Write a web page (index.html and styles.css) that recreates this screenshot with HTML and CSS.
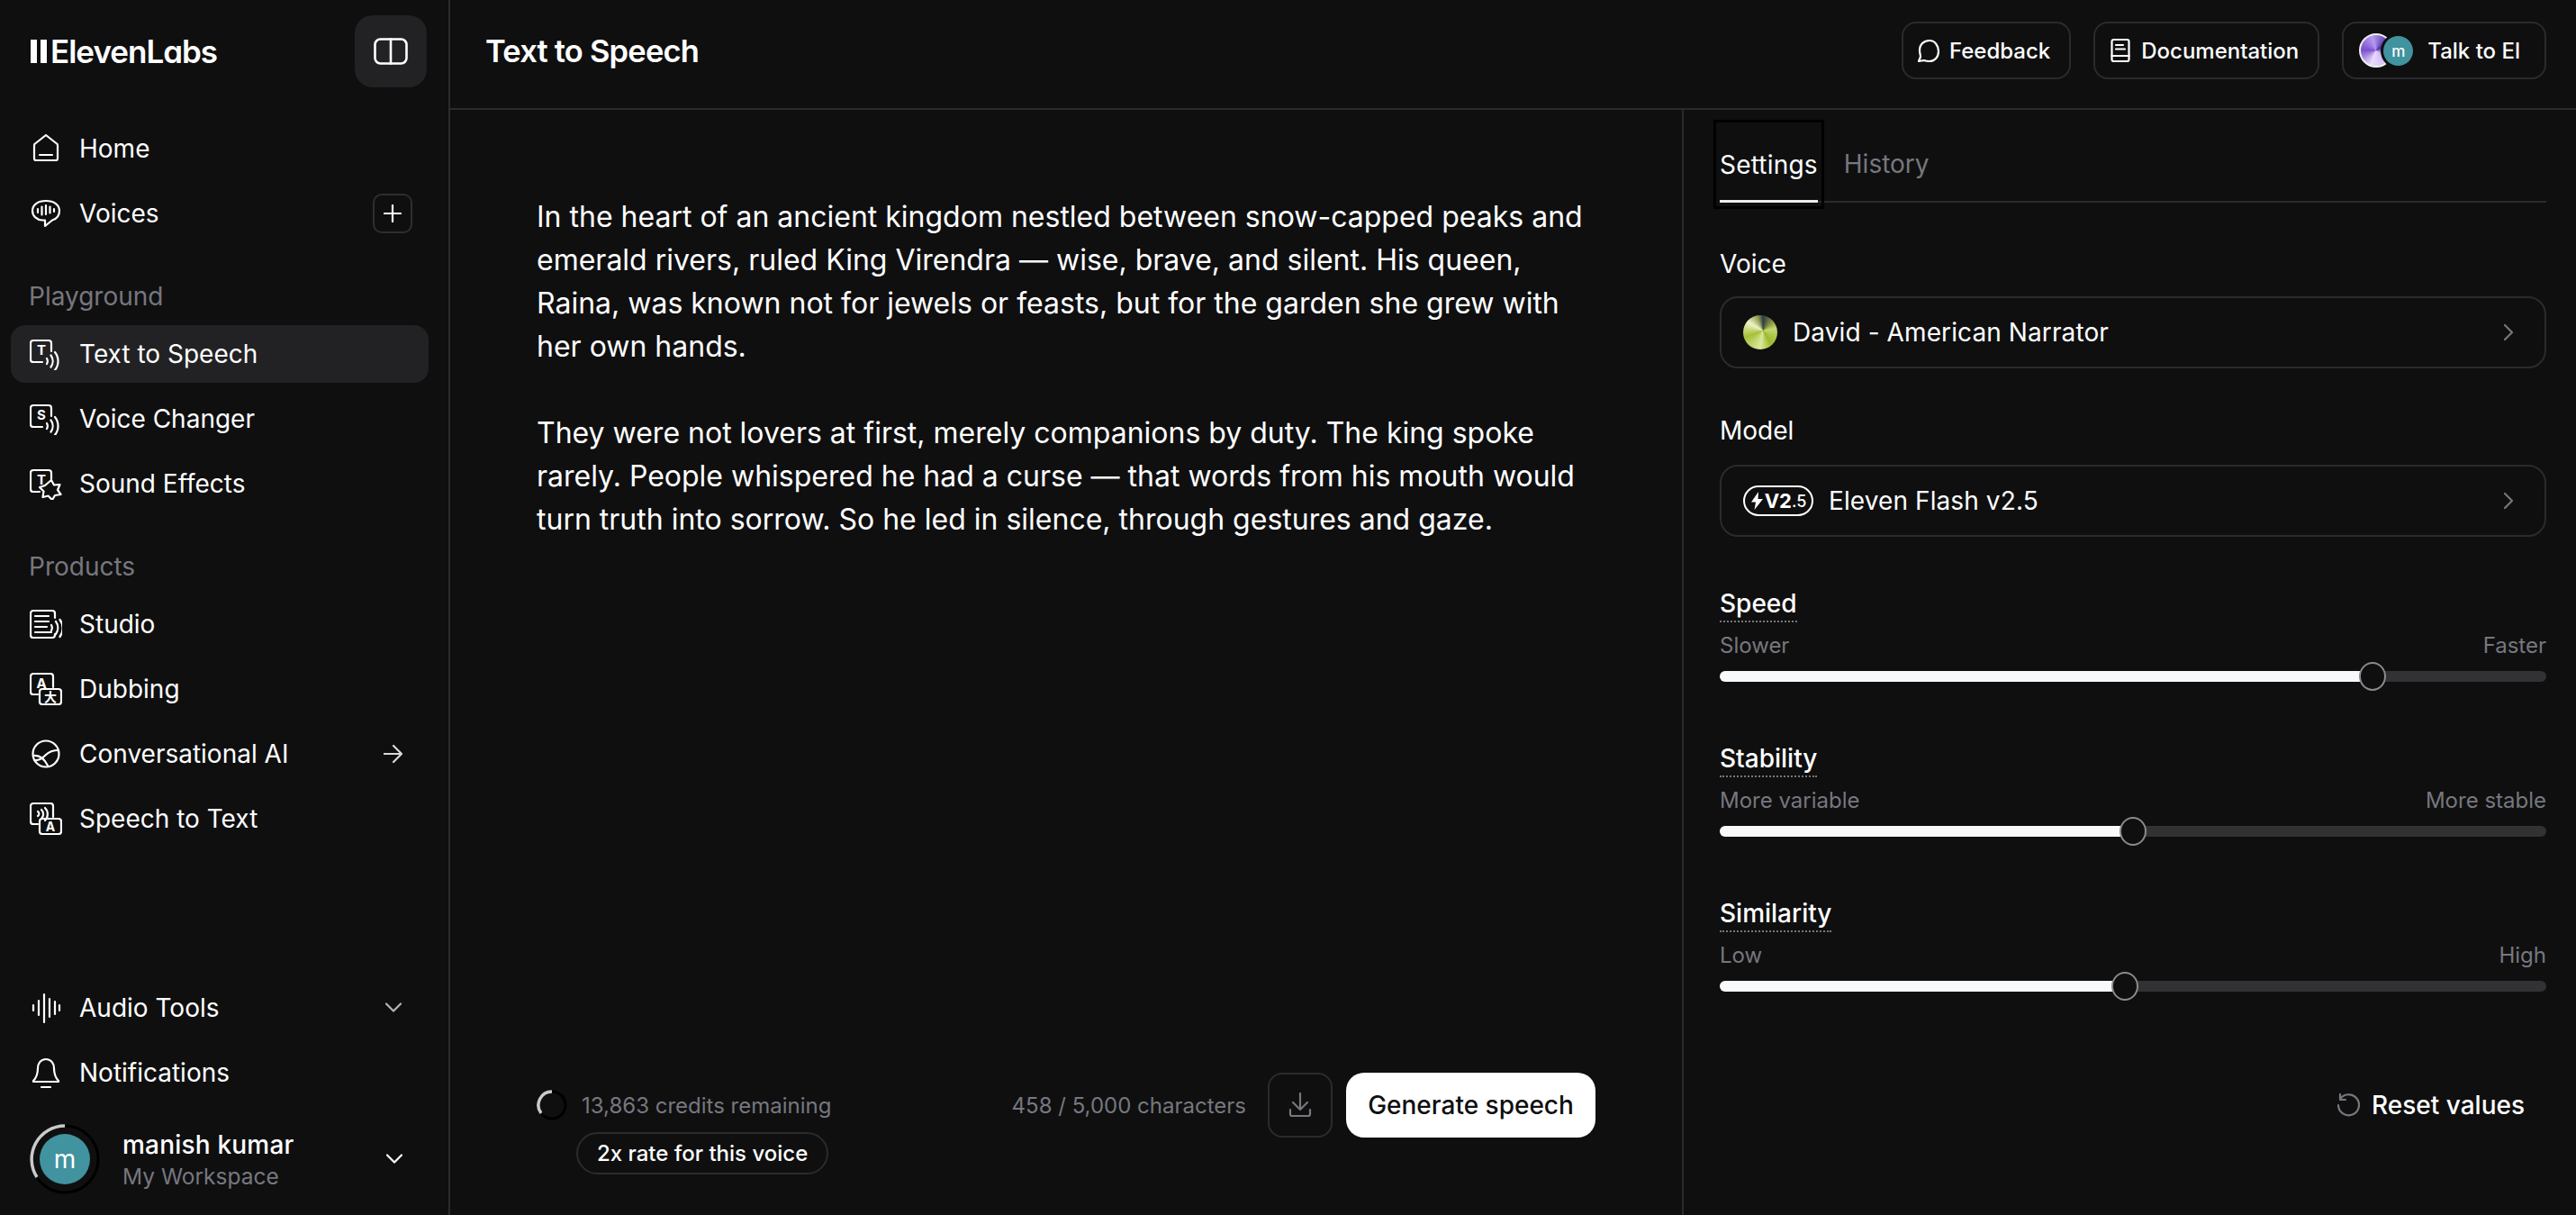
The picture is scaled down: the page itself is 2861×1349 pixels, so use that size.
FILE: index.html
```html
<!DOCTYPE html>
<html lang="en">
<head>
<meta charset="utf-8">
<title>Text to Speech</title>
<link rel="stylesheet" href="styles.css">
</head>
<body>
<div class="app">
  <aside class="sidebar">
    <div class="brand">
      <div class="logo"><span class="logo-bars"><i></i><i></i></span><span class="logo-text">ElevenLabs</span></div>
      <button class="toggle"><svg width="38" height="30" viewBox="0 0 38 30" class="ico ico-strong"><rect x="1.500" y="1.500" width="35" height="27" rx="6"/><path d="M19 1.500v27"/></svg></button>
    </div>
    <nav class="nav nav-top">
      <a class="item"><svg class="ico item-ico" viewBox="0 0 36 36"><path d="M18 3 30 12.500a2 2 0 0 1 1 2V29a2 2 0 0 1-2 2H7a2 2 0 0 1-2-2V14.500a2 2 0 0 1 1-2Z"/><path d="M11 25h14"/></svg><span>Home</span></a>
      <a class="item"><svg class="ico item-ico" viewBox="0 0 36 36"><path d="M18 4C9 4 3 8.500 3 15c0 6 5 10 11 10.500h3l0 6.500 8-6.500C30 24 33 20 33 15 33 8.500 27 4 18 4Z"/><path d="M9 13v4M13.500 10.500v9M18 9v10M22.500 10.500v7M27 13v3"/></svg><span>Voices</span><span class="plus"><svg class="ico" width="20" height="20" viewBox="0 0 20 20"><path d="M10 1v18M1 10h18"/></svg></span></a>
    </nav>
    <div class="section-label">Playground</div>
    <nav class="nav">
      <a class="item active"><svg class="ico item-ico" viewBox="0 0 36 36"><path d="M14 27H4a3 3 0 0 1-3-3V6a3 3 0 0 1 3-3h17a3 3 0 0 1 3 3v9"/><text x="13" y="19" class="ico-text">T</text><path d="M19 23a6 6 0 0 1 0 6M23.500 19.500a11 11 0 0 1 0 13M28 16a16 16 0 0 1 0 20"/></svg><span>Text to Speech</span></a>
      <a class="item"><svg class="ico item-ico" viewBox="0 0 36 36"><path d="M14 27H4a3 3 0 0 1-3-3V6a3 3 0 0 1 3-3h17a3 3 0 0 1 3 3v9"/><text x="13" y="19" class="ico-text">S</text><path d="M19 23a6 6 0 0 1 0 6M23.500 19.500a11 11 0 0 1 0 13M28 16a16 16 0 0 1 0 20"/></svg><span>Voice Changer</span></a>
      <a class="item"><svg class="ico item-ico" viewBox="0 0 36 36"><path d="M11 27H4a3 3 0 0 1-3-3V6a3 3 0 0 1 3-3h17a3 3 0 0 1 3 3v7"/><text x="13" y="19" class="ico-text">T</text><path d="M24 14l3 5.500 6.500-.5-2.500 6 3.500 5-6.500 1L25 36l-4.500-4.500-6 1.500 1-6.500-4.500-4.500 6-2Z"/></svg><span>Sound Effects</span></a>
    </nav>
    <div class="section-label">Products</div>
    <nav class="nav">
      <a class="item"><svg class="ico item-ico" viewBox="0 0 36 36"><path d="M28 11V6a3 3 0 0 0-3-3H4a3 3 0 0 0-3 3v24a3 3 0 0 0 3 3h21a3 3 0 0 0 3-3v-1"/><path d="M6 9h15M6 15h15M6 21h13M6 27h18"/><path d="M24 19a6 6 0 0 1 0 6M29 15a12 12 0 0 1 0 14M33.500 13a16 16 0 0 1 0 19"/></svg><span>Studio</span></a>
      <a class="item"><svg class="ico item-ico" viewBox="0 0 36 36"><path d="M9 24H4a3 3 0 0 1-3-3V4a3 3 0 0 1 3-3h19a3 3 0 0 1 3 3v12"/><text x="13" y="17" class="ico-text">A</text><rect x="11" y="18" width="24" height="17" rx="3"/><text x="23" y="32" class="ico-text ico-small">大</text></svg><span>Dubbing</span></a>
      <a class="item"><svg class="ico item-ico" viewBox="0 0 36 36"><circle cx="18" cy="18" r="14.500"/><path d="M4 20c7-1 12 3 16 11M5 25c5 1 11-4 13-6 3-3 8-5 14-5"/></svg><span>Conversational AI</span><svg class="ico arrow" width="22" height="22" viewBox="0 0 22 22"><path d="M0 11h20M11 2l9 9-9 9"/></svg></a>
      <a class="item"><svg class="ico item-ico" viewBox="0 0 36 36"><path d="M9 24H4a3 3 0 0 1-3-3V4a3 3 0 0 1 3-3h19a3 3 0 0 1 3 3v12"/><path d="M9 10a3 3 0 0 1 0 5M13 8a7 7 0 0 1 0 10M17 6a10 10 0 0 1 0 14"/><rect x="11" y="18" width="24" height="17" rx="3"/><text x="23" y="32" class="ico-text ico-small">A</text></svg><span>Speech to Text</span></a>
    </nav>
    <div class="sidebar-bottom">
      <a class="item"><svg class="ico item-ico" viewBox="0 0 36 36"><path d="M4 15v6M10 10v16M16 3v31M22 8v20M28 11v14M33 15v6"/></svg><span>Audio Tools</span><svg class="ico chev chev-dim" width="18" height="12" viewBox="0 0 18 12"><path d="M1 1.500l8 8 8-8"/></svg></a>
      <a class="item"><svg class="ico item-ico" viewBox="0 0 36 36"><path d="M18 3c-6 0-9 5-9 10 0 7-2 11-5 14v1h28v-1c-3-3-5-7-5-14 0-5-3-10-9-10Z"/><path d="M13 34h10"/></svg><span>Notifications</span></a>
      <div class="user">
        <div class="ring">
          <svg width="78" height="78" viewBox="0 0 78 78" class="ring-svg"><circle cx="39" cy="39" r="37" class="ring-track"/><path d="M39 2A37 37 0 0 0 8 59" class="ring-arc"/></svg>
          <span class="avatar">m</span>
        </div>
        <div class="user-text"><div class="user-name">manish kumar</div><div class="user-ws">My Workspace</div></div>
        <svg class="ico chev" width="18" height="12" viewBox="0 0 18 12"><path d="M1 1.500l8 8 8-8"/></svg>
      </div>
    </div>
  </aside>

  <div class="content">
    <header class="topbar">
      <h1 class="title">Text to Speech</h1>
      <div class="top-actions">
        <button class="pill"><svg class="ico" width="26" height="28" viewBox="0 0 26 28"><path d="M14 3C8 3 3 7 3 14c0 3 1 5 1 7l-2 5 6-1c2 1 4 1 6 1 6 0 10-5 10-11S20 3 14 3Z"/></svg>Feedback</button>
        <button class="pill pill-doc"><svg class="ico" width="22" height="28" viewBox="0 0 22 28"><rect x="1.500" y="2" width="19" height="24" rx="2"/><path d="M1.500 20h19M6 8h8M6 12.500h10"/></svg>Documentation</button>
        <button class="pill pill-talk"><span class="duo"><span class="duo-purple"></span><span class="duo-teal">m</span></span>Talk to El</button>
      </div>
    </header>
    <div class="workspace">
      <main class="editor">
        <div class="editor-text">
          <p>In the heart of an ancient kingdom nestled between snow-capped peaks and emerald rivers, ruled King Virendra — wise, brave, and silent. His queen, Raina, was known not for jewels or feasts, but for the garden she grew with her own hands.</p>
          <p>They were not lovers at first, merely companions by duty. The king spoke rarely. People whispered he had a curse — that words from his mouth would turn truth into sorrow. So he led in silence, through gestures and gaze.</p>
        </div>
        <div class="editor-footer">
          <div class="credits">
            <div class="credit-row">
              <svg width="34" height="34" viewBox="0 0 34 34" class="spinner"><circle cx="17" cy="17" r="15" class="ring-track"/><path d="M17 2A15 15 0 0 0 5 26" class="ring-arc"/></svg>
              <span class="muted">13,863 credits remaining</span>
            </div>
            <span class="chip">2x rate for this voice</span>
          </div>
          <div class="gen">
            <span class="muted">458 / 5,000 characters</span>
            <button class="download"><svg class="ico ico-muted" width="26" height="28" viewBox="0 0 26 28"><path d="M13 1v18M5 11l8 8 8-8M2 19v5a2 2 0 0 0 2 2h18a2 2 0 0 0 2-2v-5"/></svg></button>
            <button class="generate">Generate speech</button>
          </div>
        </div>
      </main>
      <section class="panel">
        <div class="tabs"><span class="tab tab-on">Settings</span><span class="tab">History</span></div>
        <div class="field field-voice">
          <div class="field-label">Voice</div>
          <div class="select"><span class="orb"></span><span class="select-text select-voice">David - American Narrator</span><svg class="ico ico-muted select-chev" width="12" height="20" viewBox="0 0 12 20"><path d="M2 2l8 8-8 8"/></svg></div>
        </div>
        <div class="field field-model">
          <div class="field-label">Model</div>
          <div class="select select-tall"><span class="badge"><svg width="13" height="20" viewBox="0 0 13 20"><path d="M8 0 0 11.500h5L3.500 20 13 8H7.500Z" fill="#fff"/></svg><b>V2</b><b class="badge-small">.5</b></span><span class="select-text select-model">Eleven Flash v2.5</span><svg class="ico ico-muted select-chev" width="12" height="20" viewBox="0 0 12 20"><path d="M2 2l8 8-8 8"/></svg></div>
        </div>
        <div class="slider slider-first">
          <span class="slider-name">Speed</span>
          <div class="slider-ends"><span>Slower</span><span>Faster</span></div>
          <div class="track"><div class="fill" style="width:79%"><span class="thumb"></span></div></div>
        </div>
        <div class="slider">
          <span class="slider-name">Stability</span>
          <div class="slider-ends"><span>More variable</span><span>More stable</span></div>
          <div class="track"><div class="fill" style="width:50%"><span class="thumb"></span></div></div>
        </div>
        <div class="slider">
          <span class="slider-name">Similarity</span>
          <div class="slider-ends"><span>Low</span><span>High</span></div>
          <div class="track"><div class="fill" style="width:49%"><span class="thumb"></span></div></div>
        </div>
        <div class="reset"><svg class="ico ico-muted" width="26" height="26" viewBox="0 0 26 26"><path d="M5 5a11.500 11.500 0 1 1-3 8"/><path d="M4 1v6h6"/></svg><span>Reset values</span></div>
      </section>
    </div>
  </div>
</div>
</body>
</html>
```
FILE: styles.css
```css
* { box-sizing: border-box; }
html, body { margin: 0; height: 100%; }
body {
  background: #0f0f10;
  color: #fff;
  font-family: Inter, "Noto Sans", sans-serif;
  font-size: 28px;
  overflow: hidden;
}
button { font: inherit; color: inherit; background: none; padding: 0; border: 0; }
.app { display: flex; width: 100%; height: 100vh; }

.ico { fill: none; stroke: #fff; stroke-width: 2.200; stroke-linecap: round; stroke-linejoin: round; flex: none; }
.ico-strong { stroke-width: 2.600; }
.ico-muted { stroke: #77777e; }
.ico-text { fill: #fff; stroke: none; font-size: 15px; font-weight: 700; text-anchor: middle; font-family: Inter, sans-serif; }
.ico-small { font-size: 14px; font-family: Inter, "Noto Sans CJK SC", sans-serif; }

/* sidebar */
.sidebar {
  width: 500px; flex: none;
  border-right: 2px solid #2b2b2d;
  display: flex; flex-direction: column;
  padding: 17px 0 23px;
}
.brand { display: flex; align-items: center; justify-content: space-between; padding: 0 24px 0 34px; height: 80px; }
.logo { display: flex; align-items: center; }
.logo-bars { display: flex; gap: 4px; margin-right: 4px; }
.logo-bars i { display: block; width: 7px; height: 26px; background: #fff; }
.logo-text { font-size: 35px; font-weight: 600; letter-spacing: -1px; font-feature-settings: "cv11"; }
.toggle { width: 80px; height: 80px; border-radius: 20px; background: #222224; display: flex; align-items: center; justify-content: center; }

.nav { display: flex; flex-direction: column; gap: 8px; }
.nav-top { margin-top: 36px; }
.item {
  display: flex; align-items: center; height: 64px; margin: 0 22px 0 12px; padding: 0 18px 0 21px;
  border-radius: 16px; gap: 19px;
}
.item.active { background: #222224; }
.item-ico { width: 36px; height: 36px; }
.plus {
  margin-left: auto; width: 44px; height: 44px; border: 2px solid #2e2e30; border-radius: 10px;
  display: flex; align-items: center; justify-content: center; margin-right: 0;
}
.arrow { margin-left: auto; margin-right: 10px; stroke: #d8d8dc; }
.chev { margin-left: auto; margin-right: 12px; }
.chev-dim { stroke: #b5b5ba; }
.section-label { color: #77777e; height: 36px; line-height: 36px; margin: 42px 0 14px 32px; }
.section-label + .nav { margin-top: 0; }
.sidebar-bottom { margin-top: auto; display: flex; flex-direction: column; gap: 8px; }
.user { display: flex; align-items: center; margin: 17px 22px 0 33px; padding-right: 0; height: 78px; }
.user .chev { margin-right: 29px; }
.ring { position: relative; width: 78px; height: 78px; flex: none; display: flex; align-items: center; justify-content: center; }
.ring-svg { position: absolute; inset: 0; }
.ring-track { fill: none; stroke: #000; stroke-width: 3; }
.ring-arc { fill: none; stroke: #c9cacd; stroke-width: 3.500; }
.avatar { width: 56px; height: 56px; border-radius: 50%; background: #40939f; display: flex; align-items: center; justify-content: center; font-size: 28px; position: relative; }
.user-text { margin-left: 25px; padding-top: 2px; }
.user-name { font-weight: 500; line-height: 36px; letter-spacing: .2px; }
.user-ws { color: #77777e; font-size: 24.500px; line-height: 34px; }

/* top bar */
.content { flex: 1; min-width: 0; display: flex; flex-direction: column; }
.topbar { height: 122px; flex: none; border-bottom: 2px solid #2b2b2d; display: flex; align-items: center; justify-content: space-between; padding: 0 33px 8px 39px; }
.title { margin: 0; font-size: 34.500px; font-weight: 600; letter-spacing: -.8px; }
.top-actions { display: flex; gap: 25px; }
.pill { height: 64px; border: 2px solid #2b2b2d; border-radius: 16px; padding: 0 21px 0 15px; display: flex; align-items: center; gap: 10px; font-size: 24px; font-weight: 500; }
.pill-doc { padding: 0 21px 0 17px; gap: 12px; }
.pill-talk { gap: 16px; padding-left: 17px; padding-right: 27px; }
.duo { position: relative; width: 60px; height: 40px; }
.duo-purple { position: absolute; left: 0; top: 1px; width: 38px; height: 38px; border-radius: 50%; background: conic-gradient(from 200deg, #e8dcfb, #7b4fd0, #b79aef, #4d2ea6, #cdb7f5, #e8dcfb); border: 2px solid #eee; }
.duo-teal { position: absolute; left: 27px; top: 4px; width: 33px; height: 33px; border-radius: 50%; background: #40939f; font-size: 17px; display: flex; align-items: center; justify-content: center; box-shadow: 0 0 0 3px #0f0f10; }

.workspace { flex: 1; display: flex; min-height: 0; }

/* editor */
.editor { width: 1370px; flex: none; display: flex; flex-direction: column; padding: 94px 96px 46px; border-right: 2px solid #2b2b2d; }
.editor-text { flex: 1; font-size: 32px; line-height: 48px; width: 1180px; padding-top: 1px; }
.editor-text p { margin: 0 0 48px; }
.editor-footer { display: flex; justify-content: space-between; align-items: flex-start; height: 112px; }
.credits { padding-top: 19px; display: flex; flex-direction: column; align-items: flex-start; gap: 13px; }
.credit-row { display: flex; align-items: center; gap: 16px; height: 34px; }
.muted { color: #77777e; font-size: 24px; }
.chip { margin-left: 44px; height: 47px; border: 2px solid #2b2b2d; border-radius: 24px; padding: 0 21px; display: flex; align-items: center; font-size: 24px; font-weight: 500; }
.gen { display: flex; align-items: center; gap: 15px; }
.gen .muted { margin-right: 9px; }
.download { width: 72px; height: 72px; border: 2px solid #2b2b2d; border-radius: 16px; display: flex; align-items: center; justify-content: center; }
.generate { width: 277px; height: 72px; background: #fff; color: #0f0f10; border-radius: 20px; font-size: 28px; font-weight: 500; }

/* right panel */
.panel { flex: 1; min-width: 0; padding: 0 33px 0 40px; display: flex; flex-direction: column; }
.tabs { display: flex; gap: 29px; margin-top: 0; height: 103px; border-bottom: 2px solid #2b2b2d; align-items: flex-end; }
.tab { color: #77777e; height: 75px; line-height: 69px; }
.tab-on { color: #fff; border-bottom: 3px solid #ececed; outline: 3px solid #000; outline-offset: 4px; height: 85px; line-height: 87px; margin-bottom: -2px; position: relative; letter-spacing: .2px; }
.field-label { height: 36px; line-height: 36px; }
.field-voice { margin-top: 50px; }
.field-model { margin-top: 51px; }
.select { height: 80px; margin-top: 18px; border: 2px solid #2b2b2d; border-radius: 20px; display: flex; align-items: center; padding: 0 24px; }
.select-tall { margin-top: 20px; }
.select-chev { margin-left: auto; margin-right: 10px; }
.orb { width: 38px; height: 38px; border-radius: 50%; background: conic-gradient(at 58% 45%, #2f3a4f 0deg, #7b8a3a 40deg, #c6d872 80deg, #9cba2c 150deg, #dbe8a0 190deg, #a6c036 250deg, #eef2c8 300deg, #8a9a4a 340deg, #2f3a4f 360deg); flex: none; }
.select-voice { margin-left: 17px; }
.select-model { margin-left: 17px; }
.select-text { font-weight: 400; letter-spacing: .1px; }
.badge { width: 78px; height: 34px; border: 2.500px solid #fff; border-radius: 17px; display: flex; align-items: center; justify-content: center; font-size: 22px; flex: none; padding-left: 1px; }
.badge b { font-weight: 700; margin-left: 0; }
.badge svg { margin-right: 2px; }
.badge-small { font-size: 18px; font-weight: 500 !important; }

.slider { margin-top: 67px; position: relative; }
.slider-first { margin-top: 56px; }
.slider-name { display: inline-block; height: 39px; line-height: 36px; border-bottom: 2px dotted #77777e; font-weight: 500; }
.slider-ends { display: flex; justify-content: space-between; color: #77777e; font-size: 24px; height: 34px; line-height: 34px; margin-top: 9px; }
.track { height: 12px; border-radius: 6px; background: #323234; margin-top: 11px; }
.fill { height: 12px; border-radius: 6px; background: #f8f9fa; position: relative; }
.thumb { position: absolute; right: -15px; top: -10px; width: 30px; height: 32px; border-radius: 50%; background: #0f0f10; border: 2px solid #8b8b8f; }
.reset { margin-top: auto; margin-bottom: 105px; align-self: flex-end; display: flex; align-items: center; gap: 13px; margin-right: 24px; font-weight: 500; }
```
